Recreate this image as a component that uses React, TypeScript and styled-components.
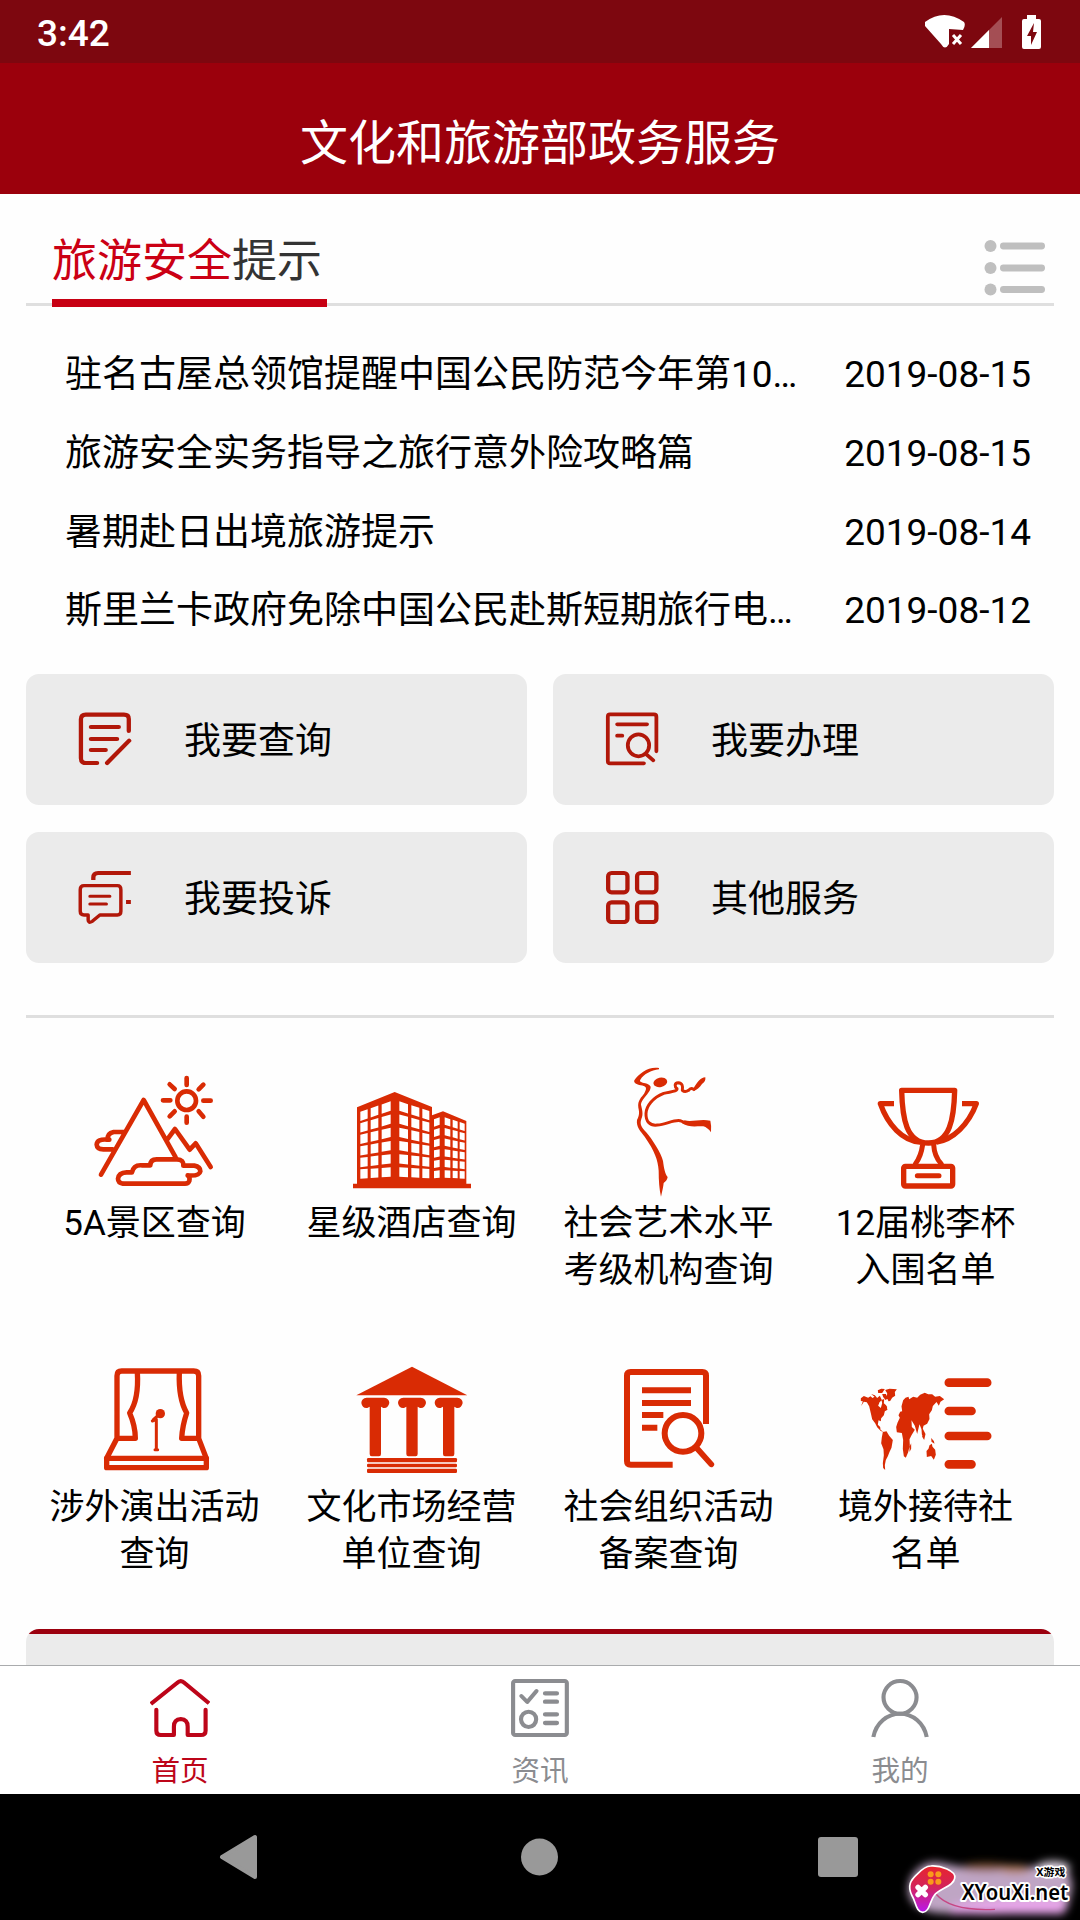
import React from "react";
import styled, { createGlobalStyle } from "styled-components";

const Global = createGlobalStyle`
  * { box-sizing: border-box; }
  html, body { margin: 0; padding: 0; background: #fff; }
  body { font-family: Roboto, "Noto Sans CJK SC", sans-serif; color: #000; }
  svg { display: block; }
`;

const RED = "#d92b04";
const DEEP = "#b11709";
const TAB_RED = "#bd0519";
const TAB_GREY = "#8b8c90";

const Screen = styled.div`
  position: relative;
  width: 1080px;
  height: 1920px;
  overflow: hidden;
  display: flex;
  flex-direction: column;
  background: #fefefe;
`;

const StatusBar = styled.header`
  height: 63px;
  flex: none;
  display: flex;
  align-items: center;
  justify-content: space-between;
  padding: 2px 36px 0 37px;
  background: #7d070f;
  color: #fff;
`;

const Clock = styled.span`
  font-size: 37px;
  font-weight: 500;
  line-height: 44px;
  padding-top: 3px;
`;

const TitleBar = styled.div`
  height: 131px;
  flex: none;
  display: flex;
  align-items: center;
  justify-content: center;
  padding-top: 30px;
  background: #9b000c;
  color: #fff;
  font-size: 48px;
  line-height: 60px;
`;

const Content = styled.main`
  flex: 1;
  min-height: 0;
  overflow: hidden;
  padding: 0 26px;
  display: flex;
  flex-direction: column;
`;

const SectionHead = styled.div`
  height: 113px;
  flex: none;
  display: flex;
  align-items: flex-end;
  justify-content: space-between;
  padding: 0 9px 0 26px;
  background: linear-gradient(#dfdfdf, #dfdfdf) 0 109px / 100% 3px no-repeat;
`;

const SectionTitle = styled.h1`
  margin: 0;
  width: 275px;
  height: 80px;
  border-bottom: 8px solid #c70013;
  font-size: 45px;
  font-weight: 400;
  line-height: 69px;
  white-space: nowrap;
  color: #333;
`;

const Accent = styled.span`
  color: #cb0014;
`;

const MenuIcon = styled.svg`
  width: 61px;
  height: 56px;
  margin-bottom: 11px;
`;

const NewsList = styled.ul`
  list-style: none;
  margin: 0;
  padding: 29px 23px 0 39px;
  flex: none;
  height: 367px;
`;

const NewsRow = styled.li`
  display: flex;
  justify-content: space-between;
  height: 78.7px;
  align-items: center;
  font-size: 37px;
  line-height: 48px;
  white-space: nowrap;
`;

const NewsTitle = styled.span`
  width: 740px;
  overflow: hidden;
  text-overflow: ellipsis;
`;

const Cards = styled.div`
  display: grid;
  grid-template-columns: 501px 501px;
  grid-auto-rows: 131px;
  gap: 27px 26px;
  flex: none;
`;

const Card = styled.div`
  display: flex;
  align-items: center;
  gap: 52px;
  padding-left: 52px;
  border-radius: 13px;
  background: #ebebeb;
  font-size: 37px;
  line-height: 48px;
`;

const CardLabel = styled.span`
  padding-top: 4px;
`;

const CardIcon = styled.svg`
  width: 54px;
  height: 54px;
  margin-bottom: 1px;
  fill: none;
  stroke: ${DEEP};
  stroke-width: 12.5;
  stroke-linecap: round;
  stroke-linejoin: round;
`;

const Divider = styled.div`
  height: 3px;
  flex: none;
  margin: 52px 0 48px;
  background: #dfdfdf;
`;

const Services = styled.div`
  display: grid;
  grid-template-columns: repeat(4, 257px);
  grid-auto-rows: 284px;
  flex: none;
`;

const Service = styled.div`
  display: flex;
  flex-direction: column;
  align-items: center;
  gap: 2.2px;
  font-size: 35px;
  line-height: 47px;
  text-align: center;
  white-space: pre-line;
`;

const ServiceIcon = styled.svg`
  width: 132px;
  height: 132px;
  flex: none;
  fill: none;
  stroke: ${RED};
  stroke-width: 16;
  stroke-linecap: round;
  stroke-linejoin: round;
`;

const Panel = styled.div`
  height: 120px;
  flex: none;
  margin-top: -5px;
  border-radius: 13px;
  background: linear-gradient(#9b000e 5px, #ebebeb 5px);
`;

const TabBar = styled.nav`
  height: 129px;
  flex: none;
  display: grid;
  grid-template-columns: repeat(3, 1fr);
  border-top: 1px solid #a9abad;
  background: #fff;
`;

const Tab = styled.div<{ $active?: boolean }>`
  display: flex;
  flex-direction: column;
  align-items: center;
  padding-top: 12px;
  gap: 15px;
  font-size: 28.6px;
  line-height: 36px;
  color: ${(p) => (p.$active ? TAB_RED : TAB_GREY)};
`;

const TabIcon = styled.svg`
  width: 60px;
  height: 60px;
  fill: none;
  stroke: currentColor;
  stroke-width: 12;
  stroke-linecap: round;
  stroke-linejoin: round;
`;

const NavBar = styled.footer`
  height: 126px;
  flex: none;
  display: grid;
  grid-template-columns: 302px 297px 1fr;
  align-items: center;
  padding: 0 0 1px 219px;
  background: #000;
`;

const Badge = styled.div`
  position: absolute;
  right: 0;
  bottom: 0;
  width: 190px;
  height: 80px;
  overflow: hidden;
`;

const news = [
  ["驻名古屋总领馆提醒中国公民防范今年第10…", "2019-08-15"],
  ["旅游安全实务指导之旅行意外险攻略篇", "2019-08-15"],
  ["暑期赴日出境旅游提示", "2019-08-14"],
  ["斯里兰卡政府免除中国公民赴斯短期旅行电…", "2019-08-12"],
];

const cards = [
  {
    label: "我要查询",
    box: "226.5 156 156.8 162",
    art: (
      <path d="M374 213V177Q374 164 360 164H249Q235 164 235 178V295Q235 309 249 309H282M264 201H345M264 237H340M264 270H307M375 242L311 309" />
    ),
  },
  {
    label: "我要办理",
    box: "188.8 156 156.8 162",
    art: (
      <g strokeWidth="11">
        <path d="M338 274V170Q338 163 331 163H203Q197 163 197 170V303Q197 310 203 310H302M224 193H311M224 227H239M309 283L329 301" />
        <ellipse cx="286" cy="256" rx="31" ry="33" />
      </g>
    ),
  },
  {
    label: "我要投诉",
    box: "226.5 630 156.8 162",
    art: (
      <>
        <path
          strokeWidth="10"
          d="M244 677H341Q351 677 351 689V754Q351 765 341 765H290L268 784Q256 791 256 780V765H244Q233 765 233 754V689Q233 677 244 677Z"
        />
        <path strokeWidth="9" d="M261 709H319M261 732H309" />
        <path strokeLinecap="butt" d="M271 660V653Q271 639 285 639H380M366 726H380" />
      </>
    ),
  },
  {
    label: "其他服务",
    box: "188.8 630 156.8 162",
    art: (
      <>
        <rect x="198" y="639" width="56" height="58" rx="10" />
        <rect x="282" y="639" width="56" height="58" rx="10" />
        <rect x="198" y="727" width="56" height="59" rx="10" />
        <rect x="282" y="727" width="56" height="59" rx="10" />
      </>
    ),
  },
];

/* Window panes of one facade: each row slants between its left and right edge. */
const panes = (
  cols: number[][],
  left: number,
  right: number,
  topL: number,
  topR: number,
  bottomL: number,
  bottomR: number,
  h: number,
) =>
  Array.from({ length: 6 }, (_, r) =>
    cols.map(([a, b]) => {
      const at = (x: number) => {
        const t = (x - left) / (right - left);
        const top = topL + (topR - topL) * t;
        const bottom = bottomL + (bottomR - bottomL) * t;
        return top + ((bottom - top) * r) / 5;
      };
      return `M${a} ${at(a)}L${b} ${at(b)}V${at(b) + h}L${a} ${at(a) + h}Z`;
    }).join(""),
  ).join("");

const services = [
  {
    label: "5A景区查询",
    box: "147 48 396 396",
    art: (
      <g strokeWidth="14">
        <path d="M183 374L311 150L407 322M382 268L405 237L449 299L467 280L512 351M255 246H221Q201 250 203 269Q171 266 170 284Q171 298 190 298H218" />
        <path d="M203 269H208M249 401Q234 398 234 386Q236 368 260 367H276Q281 343 307 346H331Q331 328 350 328H411Q432 329 430 347H463Q481 350 481 364Q478 379 443 376Q451 382 448 393Q445 401 435 401Z" />
        <circle cx="440" cy="152" r="28" />
        <path d="M440 84V105M440 200V218M369 151H391M490 152H512M389 103L404 117M490 104L476 118M404 184L389 199M476 184L490 200" />
      </g>
    ),
  },
  {
    label: "星级酒店查询",
    box: "918 48 396 396",
    art: (
      <g stroke="none">
        <path
          fill={RED}
          d="M939 401H951V172L1064 126L1176 171V196L1209 184L1279 213V401H1293V415H939Z"
        />
        <path
          fill="#fff"
          d={
            panes([[961, 983], [992, 1015], [1025, 1052]], 961, 1052, 185, 154, 358, 352, 28) +
            panes([[1078, 1104], [1114, 1138], [1147, 1168]], 1078, 1168, 154, 183, 352, 357, 28) +
            panes([[1182, 1199]], 1182, 1199, 208, 202, 363, 361, 22) +
            panes([[1214, 1231], [1238, 1253], [1259, 1274]], 1214, 1274, 202, 221, 361, 364, 22)
          }
        />
      </g>
    ),
  },
  {
    label: "社会艺术水平\n考级机构查询",
    box: "189 48 396 396",
    art: (
      <>
        <g stroke="none" fill={RED}>
          <path d="M357 54C327 48 297 70 283 91C280 99 290 104 302 106C316 108 324 111 313 130C305 142 292 151 295 173C298 185 299 195 291 210C288 231 302 244 314 260C344 303 354 330 356 362C356 393 358 417 363 440C367 423 370 409 371 399C377 395 382 389 383 381C375 371 372 356 369 333C364 310 335 265 318 246C306 233 298 225 304 207C311 193 306 177 303 164C303 151 320 137 329 122C336 109 331 105 316 100C305 97 297 95 301 89C312 72 333 61 357 58Z" />
          <ellipse cx="361" cy="97" rx="21" ry="14" transform="rotate(-12 361 97)" />
          <path d="M434 211C456 217 482 205 511 212Q515 228 513 247Q503 233 490 229C467 228 445 233 426 220Z" />
          <path d="M460 116C470 99 482 82 496 82Q498 94 486 102C479 113 470 119 461 124Z" />
        </g>
        <path
          strokeWidth="9"
          d="M461 118Q452 112 446 121Q435 128 427 121C429 108 427 99 415 98C402 99 404 110 411 116C413 125 390 125 371 130C338 143 319 168 318 190C317 215 330 228 352 225C377 224 400 209 420 212Q430 216 438 218"
        />
      </>
    ),
  },
  {
    label: "12届桃李杯\n入围名单",
    box: "960 48 396 396",
    art: (
      <>
        <path d="M1085 121H1244C1242 205 1230 280 1165 279C1099 279 1087 205 1085 121Z" />
        <path
          strokeLinecap="butt"
          d="M1062 161H1021C1043 224 1088 273 1140 276M1266 161H1309C1286 223 1238 270 1190 276"
        />
        <path strokeWidth="15" d="M1148 284Q1143 320 1126 342M1181 284Q1183 320 1204 342M1132 377H1197" />
        <rect x="1091" y="349" width="147" height="59" rx="5" />
      </>
    ),
  },
  {
    label: "涉外演出活动\n查询",
    box: "147 0 396 396",
    art: (
      <>
        <path d="M231 265V77Q231 63 245 63H461Q476 63 476 77V265L499 325V353H200V325L231 265H286Q286 228 269 189Q297 148 292 66M476 265H425Q427 228 440 189Q415 145 418 66" />
        <path d="M200 325H499" />
        <path strokeWidth="9" d="M349 298V208L337 213M361 190L340 209M345 299H353" />
        <circle cx="361" cy="191" r="14" fill={RED} stroke="none" />
      </>
    ),
  },
  {
    label: "文化市场经营\n单位查询",
    box: "918 0 396 396",
    art: (
      <g stroke="none" fill={RED}>
        <path d="M1116 50L1282 136H949Z" />
        {[1006, 1116, 1226].map((x) => (
          <path
            key={x}
            d={`M${x - 26} 143H${x + 26}Q${x + 42} 145 ${x + 42} 159Q${x + 38} 176 ${x + 24} 174L${x + 17} 170V312Q${x + 17} 319 ${x + 11} 319H${x - 11}Q${x - 17} 319 ${x - 17} 312V170L${x - 24} 174Q${x - 39} 176 ${x - 42} 159Q${x - 42} 145 ${x - 26} 143Z`}
          />
        ))}
        <rect x="981" y="324" width="270" height="13" rx="4" />
        <rect x="981" y="341" width="270" height="11" rx="4" />
        <rect x="981" y="356" width="270" height="13" rx="4" />
      </g>
    ),
  },
  {
    label: "社会组织活动\n备案查询",
    box: "189 0 396 396",
    art: (
      <g strokeLinecap="butt" strokeWidth="18">
        <path d="M498 222V77Q498 66 487 66H272Q261 66 261 77V333Q261 344 272 344H398M306 121H453M306 159H453M306 195H370M306 233H352" />
        <circle cx="429" cy="250" r="63" fill="#fff" stroke="#fff" strokeWidth="12" />
        <path d="M498 150V222" />
        <circle cx="429" cy="250" r="55" />
        <path strokeLinecap="round" strokeWidth="17" d="M470 294L514 343" />
      </g>
    ),
  },
  {
    label: "境外接待社\n名单",
    box: "958.5 0 396 396",
    art: (
      <>
        <path
          stroke="none"
          fill={RED}
          d="M961 145L970 138L983 143L990 139L996 144L1002 140L992 132L1003 136L1010 144L1018 137L1024 150L1017 157L1013 167L1021 174L1025 160L1023 150L1031 147L1030 160L1037 166L1041 179L1033 184L1030 196L1022 205L1021 214L1014 211L1012 224L1019 231L1020 239L1029 246L1021 243L1010 232L1004 220L995 208L991 190L986 169L979 157L970 155L962 168L967 154L961 153Z
             M1013 129L1012 121L1022 116L1033 117L1025 129ZM1025 132L1036 132L1043 145L1035 150L1028 141ZM1034 120L1047 116L1069 118L1063 126L1064 137L1055 143L1049 153L1044 154L1039 143L1040 130ZM1030 160L1040 170L1039 178L1031 174Z
             M1027 246L1038 244L1046 257L1057 270L1053 293L1047 306L1042 319L1036 330L1033 345L1034 360L1028 354L1027 340L1030 316L1029 298L1022 280L1024 262Z
             M1071 218L1078 203L1074 196L1079 185L1085 184L1083 169L1088 151L1095 143L1104 140L1106 148L1118 140L1130 143L1139 134L1153 128L1163 133L1175 133L1184 140L1198 138L1211 148L1200 155L1195 167L1188 156L1177 168L1174 181L1166 193L1167 207L1160 221L1149 227L1147 236L1155 252L1151 270L1144 253L1143 238L1137 223L1130 252L1123 227L1113 211L1114 231L1123 239L1113 256L1107 268L1108 286L1103 307L1096 323L1090 319L1087 297L1088 270L1084 249L1069 247L1067 231Z
             M1112 280L1112 296L1107 306L1107 290ZM1146 251L1150 260L1151 270L1145 260ZM1172 264L1180 273L1182 281L1173 275ZM1158 303L1164 296L1167 286L1174 281L1176 290L1184 299L1186 314L1180 329L1172 318L1159 321Z"
        />
        <path strokeWidth="26" d="M1225 98H1340M1225 183H1293M1225 258H1340M1225 343H1293" />
      </>
    ),
  },
];

export default function App() {
  return (
    <Screen>
      <Global />
      <StatusBar>
        <Clock>3:42</Clock>
        <svg width="122" height="38" viewBox="922 13 122 38">
          <path
            fill="#fff"
            d="M925 21Q944 7 964 21Q966 24 963 29L949 28V43Q945 50 941 43L925 25Z"
          />
          <path d="M953 34L961 43M961 34L953 43" stroke="#fff" strokeWidth="3" />
          <path fill="#a44e54" d="M1002 16V47H971Z" />
          <path fill="#fff" d="M989 29V47H971Z" />
          <path
            fill="#fff"
            d="M1027 14H1036V18H1039Q1041 18 1041 20V46Q1041 48 1039 48H1024Q1022 48 1022 46V20Q1022 18 1024 18H1027Z"
          />
          <path fill="#7d070f" d="M1034 22L1027 35H1031V44L1037 31H1033Z" />
        </svg>
      </StatusBar>
      <TitleBar>文化和旅游部政务服务</TitleBar>
      <Content>
        <SectionHead>
          <SectionTitle>
            <Accent>旅游安全</Accent>提示
          </SectionTitle>
          <MenuIcon viewBox="984 240 61 56">
            {[246, 268, 289.5].map((y) => (
              <g key={y} fill="#bfbfbf">
                <circle cx="990.5" cy={y} r="6" />
                <rect x="1000" y={y - 3.4} width="45" height="6.8" rx="3.4" />
              </g>
            ))}
          </MenuIcon>
        </SectionHead>
        <NewsList>
          {news.map(([title, date]) => (
            <NewsRow key={title}>
              <NewsTitle>{title}</NewsTitle>
              <span>{date}</span>
            </NewsRow>
          ))}
        </NewsList>
        <Cards>
          {cards.map((c) => (
            <Card key={c.label}>
              <CardIcon viewBox={c.box} preserveAspectRatio="none">
                {c.art}
              </CardIcon>
              <CardLabel>{c.label}</CardLabel>
            </Card>
          ))}
        </Cards>
        <Divider />
        <Services>
          {services.map((s) => (
            <Service key={s.label}>
              <ServiceIcon viewBox={s.box}>{s.art}</ServiceIcon>
              <span>{s.label}</span>
            </Service>
          ))}
        </Services>
        <Panel />
      </Content>
      <TabBar>
        <Tab $active>
          <TabIcon viewBox="435.6 204 174.2 180" preserveAspectRatio="none">
            <path
              strokeLinecap="butt"
              d="M438 282L514 219Q525 208 536 219L607 280"
            />
            <path d="M454 299V362Q454 375 467 375H505V350Q505 328 525 327Q545 328 545 350V375H583Q597 375 597 362V299" />
          </TabIcon>
          首页
        </Tab>
        <Tab>
          <TabIcon viewBox="1481 204 174.2 180" preserveAspectRatio="none">
            <rect x="1490" y="213" width="156" height="162" rx="6" />
            <path d="M1514 258L1531 276L1558 243" />
            <ellipse cx="1535" cy="328" rx="22" ry="23" />
            <path strokeWidth="13" d="M1583 250H1617M1583 275H1617M1583 313H1617M1583 339H1617" />
          </TabIcon>
          资讯
        </Tab>
        <Tab>
          <TabIcon viewBox="958.3 204 174.2 180" preserveAspectRatio="none">
            <ellipse cx="1045.5" cy="262" rx="48" ry="49" />
            <path strokeLinecap="butt" d="M968 381C976 338 1009 311 1045.5 311C1082 311 1115 338 1123 381" />
          </TabIcon>
          我的
        </Tab>
      </TabBar>
      <NavBar>
        <svg width="38" height="46" viewBox="0 0 38 46">
          <path
            d="M3 23L36 3V43Z"
            fill="#999"
            stroke="#999"
            strokeWidth="4"
            strokeLinejoin="round"
          />
        </svg>
        <svg width="38" height="38" viewBox="0 0 38 38">
          <circle cx="18.5" cy="19" r="18.5" fill="#999" />
        </svg>
        <svg width="40" height="40" viewBox="0 0 40 40">
          <rect width="40" height="40" rx="3" fill="#999" />
        </svg>
      </NavBar>
      <Badge>
        <svg width="190" height="80" viewBox="0 0 570 240">
          <defs>
            <filter id="soft" x="-30%" y="-50%" width="160%" height="200%">
              <feGaussianBlur stdDeviation="13" />
            </filter>
            <linearGradient id="pad" x1="0" y1="0" x2="0" y2="1">
              <stop offset="0" stopColor="#e8252c" />
              <stop offset="0.45" stopColor="#d3245a" />
              <stop offset="1" stopColor="#b917ee" />
            </linearGradient>
          </defs>
          <g filter="url(#soft)">
            <path
              fill="#bfa5c4"
              d="M60 120Q90 60 150 68L210 80H500Q550 85 545 150L530 210Q350 230 170 220Q60 220 55 150Z"
            />
            <ellipse cx="290" cy="82" rx="75" ry="12" fill="#8a5a35" />
            <ellipse cx="375" cy="88" rx="45" ry="12" fill="#b07c5c" />
            <path fill="#e8a6ea" d="M190 195Q350 170 530 180L520 222H180Z" />
            <ellipse cx="490" cy="82" rx="50" ry="18" fill="#e6dcea" />
          </g>
          <path
            d="M138 162C170 200 230 212 315 208"
            fill="none"
            stroke="#c64784"
            strokeWidth="4"
          />
          <path
            d="M122 78C150 76 200 92 194 115C190 140 148 145 132 167C119 184 119 216 98 217C77 215 78 185 65 165C52 137 62 120 81 103Q105 78 122 78Z"
            fill="url(#pad)"
            stroke="#fff"
            strokeWidth="5"
          />
          <g fill="#f99a1c">
            <circle cx="122" cy="103" r="9" />
            <circle cx="145" cy="103" r="9" />
            <circle cx="122" cy="125" r="9" />
            <circle cx="145" cy="125" r="9" />
          </g>
          <path
            d="M84 142L106 164M106 142L84 164"
            stroke="#fff"
            strokeWidth="16"
            strokeLinecap="round"
          />
          <g
            fontFamily='"Noto Sans", "Noto Sans CJK SC", sans-serif'
            fill="#000"
            stroke="#fff"
            strokeLinejoin="round"
            paintOrder="stroke"
          >
            <text
              x="215"
              y="180"
              fontSize="66"
              fontWeight="600"
              strokeWidth="12"
              textLength="320"
              lengthAdjust="spacingAndGlyphs"
            >
              XYouXi.net
            </text>
            <text
              x="439"
              y="108"
              fontSize="32"
              fontWeight="700"
              strokeWidth="9"
              textLength="87"
              lengthAdjust="spacingAndGlyphs"
            >
              X游戏
            </text>
          </g>
        </svg>
      </Badge>
    </Screen>
  );
}
